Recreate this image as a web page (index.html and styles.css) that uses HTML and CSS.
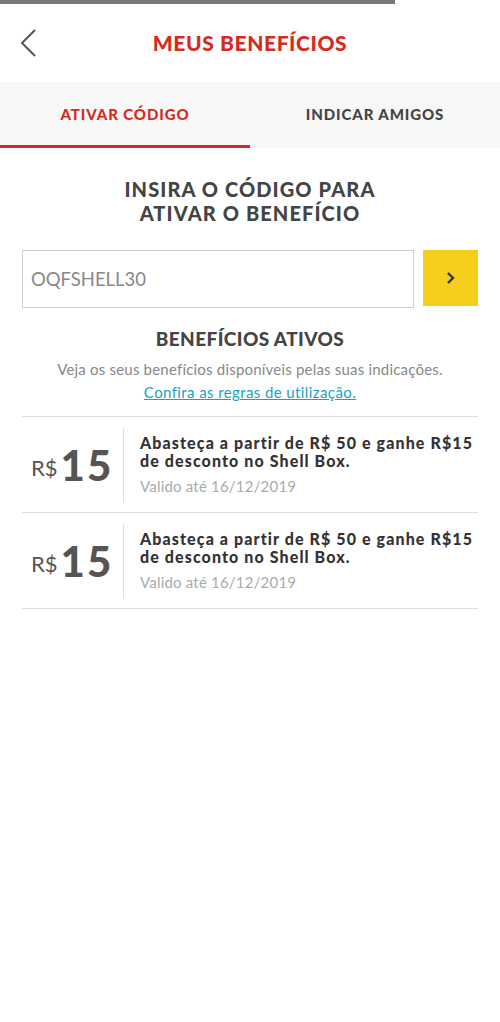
FILE: index.html
```html
<!DOCTYPE html>
<html lang="pt-BR">

<head>
  <meta charset="UTF-8">
  <title>Meus Benefícios</title>
  <link rel="stylesheet" href="styles.css">
</head>

<body>
  <div class="status"></div>
  <div class="header">
    <a class="back" href="javascript:void(0)">
      <svg width="20" height="30" viewBox="0 0 20 30">
        <polyline points="17,2 4,15 17,28" fill="none" stroke="#555" stroke-width="2" />
      </svg>
    </a>
    <h1>MEUS BENEFÍCIOS</h1>
  </div>

  <ul class="tabs">
    <li class="active">ATIVAR CÓDIGO</li>
    <li>INDICAR AMIGOS</li>
  </ul>

  <div class="content">
    <h2 class="title">INSIRA O CÓDIGO PARA<br>ATIVAR O BENEFÍCIO</h2>

    <div class="code">
      <input class="code-input" type="text" value="OQFSHELL30">
      <a class="code-btn" href="javascript:void(0)">
        <svg width="12" height="14" viewBox="0 0 12 14">
          <polyline points="3,2 8,7 3,12" fill="none" stroke="#333" stroke-width="2.4" />
        </svg>
      </a>
    </div>

    <h2 class="subtitle">BENEFÍCIOS ATIVOS</h2>
    <p class="desc">Veja os seus benefícios disponíveis pelas suas indicações.</p>
    <p class="rules"><a href="javascript:void(0)">Confira as regras de utilização.</a></p>

    <ul class="list">
      <li class="item">
        <div class="value"><span class="cur">R$</span><span class="num">15</span></div>
        <div class="info">
          <p class="info-text">Abasteça a partir de R$ 50 e ganhe R$15 de desconto no Shell Box.</p>
          <p class="info-date">Valido até 16/12/2019</p>
        </div>
      </li>
      <li class="item">
        <div class="value"><span class="cur">R$</span><span class="num">15</span></div>
        <div class="info">
          <p class="info-text">Abasteça a partir de R$ 50 e ganhe R$15 de desconto no Shell Box.</p>
          <p class="info-date">Valido até 16/12/2019</p>
        </div>
      </li>
    </ul>
  </div>
</body>

</html>
```

FILE: styles.css
```css
body,
div,
p,
ul,
li,
h1,
h2,
input {
  margin: 0;
  padding: 0;
}

ul {
  list-style-type: none;
}

a {
  text-decoration: none;
  outline: none;
}

body {
  font-family: Lato, "Liberation Sans", sans-serif;
  background: #fff;
  color: #444;
}

.status {
  width: 395px;
  height: 4px;
  background: #777;
}

.header {
  position: relative;
  height: 78px;
  display: flex;
  align-items: center;
  justify-content: center;
}

.back {
  position: absolute;
  left: 18px;
  top: 24px;
}

.header h1 {
  color: #d52b1e;
  font-size: 21px;
  font-weight: 900;
  letter-spacing: 0.6px;
  margin-top: -2px;
}

.tabs {
  display: flex;
  height: 66px;
  background: #f7f7f7;
}

.tabs li {
  flex: 1;
  display: flex;
  align-items: center;
  justify-content: center;
  font-size: 15px;
  font-weight: 900;
  letter-spacing: 0.9px;
  color: #444;
  border-bottom: 3px solid transparent;
}

.tabs li.active {
  color: #d52b1e;
  border-bottom-color: #d52b1e;
}

.content {
  padding: 0 22px;
}

.title {
  text-align: center;
  font-size: 20px;
  font-weight: 900;
  letter-spacing: 1.1px;
  line-height: 24px;
  margin-top: 29px;
}

.code {
  display: flex;
  gap: 9px;
  margin-top: 25px;
}

.code-input {
  flex: 1;
  height: 56px;
  border: 1px solid #d0d0d0;
  padding: 0 8px;
  font: 18.5px Lato, "Liberation Sans", sans-serif;
  color: #888;
}

.code-btn {
  width: 55px;
  height: 56px;
  background: #f5cf1b;
  display: flex;
  align-items: center;
  justify-content: center;
}

.subtitle {
  text-align: center;
  font-size: 19px;
  font-weight: 900;
  letter-spacing: 0.4px;
  margin-top: 19px;
  line-height: 24px;
}

.desc {
  text-align: center;
  font-size: 15px;
  letter-spacing: 0.2px;
  color: #888;
  margin-top: 7px;
  line-height: 22px;
}

.rules {
  text-align: center;
  font-size: 15px;
  letter-spacing: 0.4px;
  line-height: 24px;
}

.rules a {
  color: #1a9fc7;
  text-decoration: underline;
}

.list {
  margin-top: 12px;
  border-top: 1px solid #ddd;
}

.item {
  display: flex;
  align-items: center;
  height: 95px;
  border-bottom: 1px solid #ddd;
}

.value {
  width: 102px;
  height: 74px;
  border-right: 1px solid #ddd;
  display: flex;
  align-items: center;
  padding-left: 9px;
  box-sizing: border-box;
  color: #555;
}

.cur {
  font-size: 22px;
  margin-right: 3px;
  margin-top: 6px;
}

.num {
  font-size: 42px;
  font-weight: 900;
  letter-spacing: 2px;
}

.info {
  padding-left: 16px;
  flex: 1;
}

.info-text {
  font-size: 16px;
  font-weight: 900;
  letter-spacing: 1.1px;
  line-height: 18px;
  color: #333;
}

.info-date {
  font-size: 15px;
  letter-spacing: 0.2px;
  color: #aaa;
  margin-top: 7px;
}
```
